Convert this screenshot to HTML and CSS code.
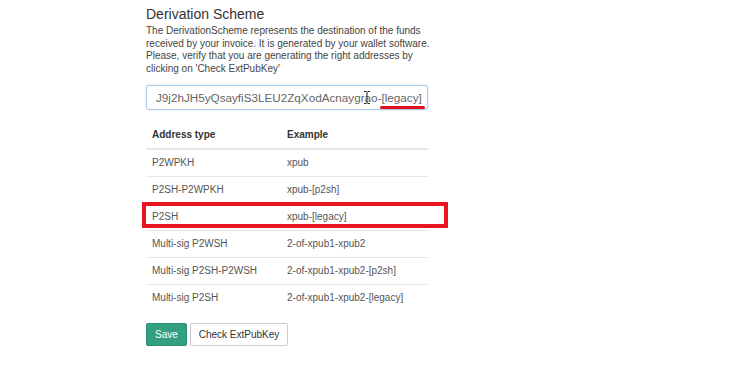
FILE: index.html
```html
<!DOCTYPE html>
<html>
	<head>
		<meta charset="utf-8">
		<title>Derivation Scheme</title>
		<link rel="stylesheet" href="styles.css">
	</head>
	<body>
		<div class="scheme">
			<h3 class="scheme-title">Derivation Scheme</h3>
			<p class="scheme-help">The DerivationScheme represents the destination of the funds received by your invoice. It is generated by your wallet software. Please, verify that you are generating the right addresses by clicking on 'Check ExtPubKey'</p>
			<div class="scheme-input">
				<span class="scheme-value">J9j2hJH5yQsayfiS3LEU2ZqXodAcnaygrao-<span class="mark">[legacy]</span></span><span class="caret"></span>
				<svg class="ibeam" width="6" height="13" viewBox="0 0 6 13"><path d="M0 0.5h2.5M3.5 0.5h2.5M3 1v11M0 12.5h2.5M3.5 12.5h2.5" stroke="#222" stroke-width="1" fill="none"/></svg>
			</div>
			<table class="types">
				<thead>
					<tr><th class="col-type">Address type</th><th>Example</th></tr>
				</thead>
				<tbody>
					<tr><td>P2WPKH</td><td>xpub</td></tr>
					<tr><td>P2SH-P2WPKH</td><td>xpub-[p2sh]</td></tr>
					<tr class="picked"><td>P2SH</td><td>xpub-[legacy]</td></tr>
					<tr><td>Multi-sig P2WSH</td><td>2-of-xpub1-xpub2</td></tr>
					<tr><td>Multi-sig P2SH-P2WSH</td><td>2-of-xpub1-xpub2-[p2sh]</td></tr>
					<tr><td>Multi-sig P2SH</td><td>2-of-xpub1-xpub2-[legacy]</td></tr>
				</tbody>
			</table>
			<div class="actions">
				<a href="javascript:;" class="btn btn-save">Save</a>
				<a href="javascript:;" class="btn btn-check">Check ExtPubKey</a>
			</div>
		</div>
	</body>
</html>
```

FILE: styles.css
```css
*,
*::before,
*::after{
	margin: 0;
	padding: 0;
	box-sizing: border-box;
}
body{
	background: #fff;
	font-family: "Liberation Sans", Arial, sans-serif;
	color: #333;
}
.scheme{
	width: 282px;
	margin-left: 146px;
	padding-top: 6px;
}
.scheme-title{
	font-size: 14px;
	font-weight: normal;
	line-height: 16px;
	color: #333;
}
.scheme-help{
	margin: 3px -8px 0 0;
	font-size: 10px;
	line-height: 12.7px;
	color: #444;
}
.scheme-input{
	position: relative;
	height: 25px;
	margin-top: 9px;
	padding: 0 9px;
	border: 1px solid #a9c9ea;
	border-radius: 3px;
	box-shadow: 0 0 2px rgba(102,175,233,.4);
	display: flex;
	align-items: center;
	font-size: 11.7px;
	color: #666;
	white-space: nowrap;
	overflow: hidden;
}
.mark{
	position: relative;
}
.mark::after{
	content: "";
	position: absolute;
	left: -1px;
	right: -3px;
	bottom: -5px;
	height: 3px;
	border-radius: 2px;
	background: #e3101c;
}
.caret{
	width: 1px;
	height: 13px;
	margin-left: 1px;
	background: #333;
}
.ibeam{
	position: absolute;
	left: 217px;
	top: 5px;
}
.types{
	width: 100%;
	margin-top: 12px;
	border-collapse: collapse;
	font-size: 10px;
	color: #555;
}
.types th,
.types td{
	padding: 6px 6px;
	line-height: 14px;
	text-align: left;
}
.types th{
	color: #333;
	border-bottom: 2px solid #e6e6e6;
}
.col-type{
	width: 135px;
}
.types td{
	height: 26.7px;
}
.types tbody tr{
	border-bottom: 1px solid #e8e8e8;
}
.types tbody tr:last-child{
	border-bottom: 0;
}
.picked td:first-child{
	position: relative;
}
.picked td:first-child::after{
	content: "";
	position: absolute;
	left: -4px;
	top: -2px;
	width: 306px;
	height: 26px;
	border: 4px solid #e8141f;
}
.actions{
	display: flex;
	gap: 3px;
	margin-top: 12px;
}
.btn{
	display: block;
	height: 23px;
	line-height: 21px;
	border: 1px solid #ccc;
	border-radius: 2px;
	font-size: 10px;
	text-align: center;
	text-decoration: none;
	color: #333;
	background: #fff;
}
.btn-save{
	width: 41px;
	background: #329f80;
	border-color: #2c8e72;
	color: #fff;
}
.btn-check{
	width: 98px;
}
```
